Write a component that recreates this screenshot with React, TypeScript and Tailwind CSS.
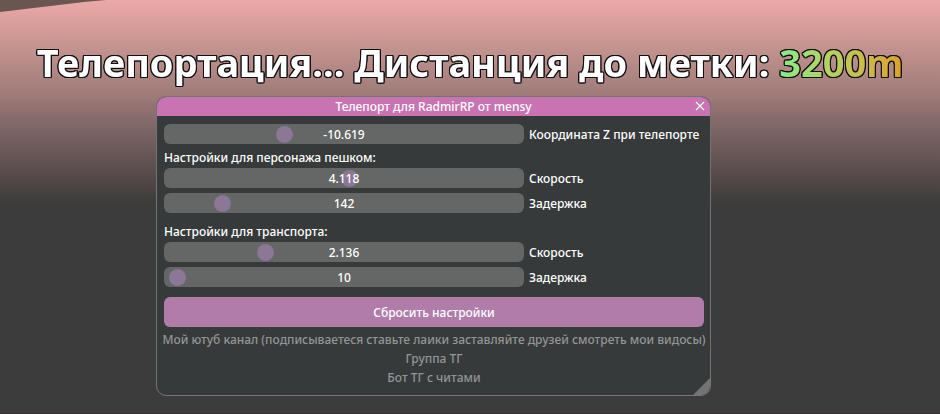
import { useState } from "react";

type Key = "z" | "walkSpeed" | "walkDelay" | "carSpeed" | "carDelay";

interface Setting {
  id: Key;
  label: string;
  min: number;
  max: number;
  digits: number;
}

const defaults: Record<Key, number> = {
  z: -10.619,
  walkSpeed: 4.118,
  walkDelay: 142,
  carSpeed: 2.136,
  carDelay: 10,
};

const height: Setting = { id: "z", label: "Координата Z при телепорте", min: -30, max: 30, digits: 3 };
const walking: Setting[] = [
  { id: "walkSpeed", label: "Скорость", min: 0, max: 8, digits: 3 },
  { id: "walkDelay", label: "Задержка", min: 0, max: 1000, digits: 0 },
];
const vehicle: Setting[] = [
  { id: "carSpeed", label: "Скорость", min: 0, max: 8, digits: 3 },
  { id: "carDelay", label: "Задержка", min: 0, max: 1000, digits: 0 },
];

interface RowProps {
  setting: Setting;
  value: number;
  onChange: (id: Key, value: number) => void;
}

function SliderRow({ setting, value, onChange }: RowProps) {
  return (
    <div className="flex h-5 items-center gap-[5px]">
      <div className="relative h-5 w-2/3">
        <input
          id={setting.id}
          type="range"
          min={setting.min}
          max={setting.max}
          step={setting.digits ? 0.001 : 1}
          value={value}
          onChange={(e) => onChange(setting.id, Number(e.target.value))}
          className="block h-5 w-full cursor-pointer appearance-none rounded-md bg-[#656766] px-0.5 [&::-webkit-slider-thumb]:size-[17px] [&::-webkit-slider-thumb]:appearance-none [&::-webkit-slider-thumb]:rounded-full [&::-webkit-slider-thumb]:bg-[#8b7796]"
        />
        <output
          htmlFor={setting.id}
          className="pointer-events-none absolute inset-0 text-center leading-[22px]"
        >
          {value.toFixed(setting.digits)}
        </output>
      </div>
      <label htmlFor={setting.id} className="pt-0.5 leading-5 whitespace-nowrap">
        {setting.label}
      </label>
    </div>
  );
}

export default function App() {
  const [values, setValues] = useState(defaults);
  const [open, setOpen] = useState(true);
  const change = (id: Key, value: number) => setValues((v) => ({ ...v, [id]: value }));
  const row = (s: Setting) => <SliderRow key={s.id} setting={s} value={values[s.id]} onChange={change} />;

  return (
    <main className="relative min-h-screen overflow-hidden border-b border-[#382f31] bg-[#3c3c3c] bg-[linear-gradient(to_bottom,#eca9a9_0px,#cd9994_36px,#9b7a77_98px,#856a6b_120px,#534949_178px,#3d3d3a_202px,#3c3c3c_210px)] pt-[38px] font-['Noto_Sans','Open_Sans',sans-serif]">
      <svg className="absolute top-0 left-0 h-3 w-[106px]" viewBox="0 0 106 12" aria-hidden="true">
        <path d="M0 0H106L84 2L0 12Z" fill="#6b5550" />
      </svg>

      <h1 className="text-center text-[38px] leading-[48px] font-bold whitespace-nowrap text-white [filter:drop-shadow(1px_0_0_#111)_drop-shadow(-1px_0_0_#111)_drop-shadow(0_1px_0_#111)_drop-shadow(0_-1px_0_#111)]">
        Телепортация... Дистанция до метки:{" "}
        <span className="bg-linear-to-r from-[#84ec86] via-[#bccb58] to-[#dda02a] bg-clip-text text-transparent">3200m</span>
      </h1>

      {open && (
        <section className="relative mt-[10px] ml-[156px] max-w-[555px] overflow-hidden rounded-[10px] border border-[#737474] bg-[#373a3b] text-xs font-medium text-white">
          <header className="relative h-[19px] bg-[#c973b3] text-center leading-[19px]">
            <h2>Телепорт для RadmirRP от mensy</h2>
            <button
              type="button"
              aria-label="Закрыть"
              onClick={() => setOpen(false)}
              className="absolute top-1 right-[5px] size-[10px] cursor-pointer"
            >
              <svg viewBox="0 0 10 10" className="size-[10px]" fill="none" stroke="#fff" strokeWidth="1.2">
                <path d="M1 1L9 9M9 1L1 9" />
              </svg>
            </button>
          </header>

          <div className="pt-2 pr-1.5 pb-2 pl-[7px]">
            {row(height)}
            <h3 className="mt-1 leading-5">Настройки для персонажа пешком:</h3>
            <div className="flex flex-col gap-[5px]">{walking.map(row)}</div>
            <h3 className="mt-[9px] leading-5">Настройки для транспорта:</h3>
            <div className="flex flex-col gap-[5px]">{vehicle.map(row)}</div>
            <button
              type="button"
              onClick={() => setValues(defaults)}
              className="mt-[10px] block h-[30px] w-full cursor-pointer rounded-md bg-[#b07da9] pt-0.5"
            >
              Сбросить настройки
            </button>
            <nav className="mt-[3px] flex flex-col items-center leading-[19px] whitespace-nowrap text-[#939595]">
              <a href="#youtube">Мой ютуб канал (подписываетеся ставьте лаики заставляйте друзей смотреть мои видосы)</a>
              <a href="#group">Группа ТГ</a>
              <a href="#bot">Бот ТГ с читами</a>
            </nav>
          </div>

          <svg className="absolute right-0 bottom-0 size-[17px]" viewBox="0 0 17 17" aria-hidden="true">
            <path d="M17 0V17H0Z" fill="#737574" />
          </svg>
        </section>
      )}
    </main>
  );
}
